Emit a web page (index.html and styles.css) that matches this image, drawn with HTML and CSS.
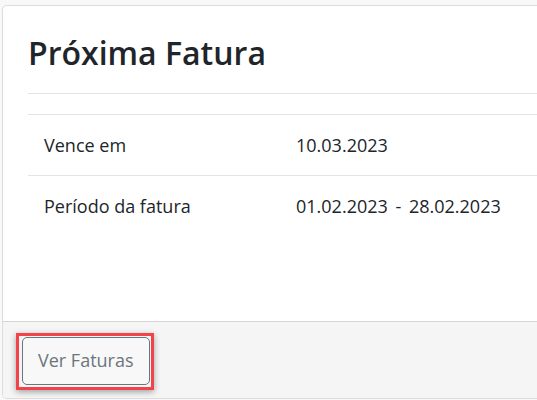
FILE: index.html
```html
<!DOCTYPE html>
<html lang="pt">
<head>
<meta charset="utf-8">
<title>Próxima Fatura</title>
<link rel="stylesheet" href="styles.css">
</head>
<body>
<div class="card">
  <div class="card-body">
    <h2 class="title">Próxima Fatura</h2>
    <hr class="divider">
    <div class="details">
      <div class="row">
        <div class="cell label">Vence em</div>
        <div class="cell value">10.03.2023</div>
      </div>
      <div class="row">
        <div class="cell label">Período da fatura</div>
        <div class="cell value range">01.02.2023 - 28.02.2023</div>
      </div>
    </div>
  </div>
  <div class="card-footer">
    <span class="highlight"><button class="btn">Ver Faturas</button></span>
  </div>
</div>
</body>
</html>
```

FILE: styles.css
```css
html, body {
  margin: 0;
  padding: 0;
}
body {
  background: #f8f8f8;
  font-family: "Open Sans", "Noto Sans", sans-serif;
  color: #212529;
  width: 537px;
  height: 400px;
  overflow: hidden;
  padding: 5px 0 0 2px;
  box-sizing: border-box;
}
.card {
  width: 535px;
  height: 394px;
  box-sizing: border-box;
  background: #fff;
  border: 1px solid #dcdcdc;
  border-right: 0;
  border-radius: 5px 0 0 5px;
  display: flex;
  flex-direction: column;
  overflow: hidden;
}
.card-body {
  flex: 1;
  padding: 28px 0 0 25px;
}
.title {
  margin: 0 0 21px;
  font-size: 32px;
  font-weight: 600;
  line-height: 38px;
  color: #212529;
}
.divider {
  margin: 0 0 20px;
  border: 0;
  border-top: 1px solid #e3e3e8;
  height: 0;
}
.details {
  border-top: 1px solid #e3e3e8;
}
.row {
  display: grid;
  grid-template-columns: 252px 1fr;
  border-bottom: 1px solid #e3e3e8;
}
.row:last-child {
  border-bottom: 0;
}
.cell {
  padding: 17px 16px 16px;
  font-size: 18px;
  line-height: 27px;
}
.range {
  word-spacing: 3px;
}
.card-footer {
  background: #f5f5f5;
  border-top: 1px solid #d6d6d6;
  height: 77px;
  padding: 11px 0 0 13px;
  box-sizing: border-box;
}
.highlight {
  display: inline-block;
  border: 3px solid #f2424a;
  padding: 1px 1px 2px 3px;
  box-shadow: 0 2px 6px rgba(0, 0, 0, 0.35);
}
.btn {
  display: block;
  font-family: inherit;
  font-size: 18px;
  line-height: 27px;
  padding: 9px 15px 10px;
  color: #6c757d;
  background: #f8f8f8;
  border: 1px solid #6c757d;
  border-radius: 5px;
}
```
